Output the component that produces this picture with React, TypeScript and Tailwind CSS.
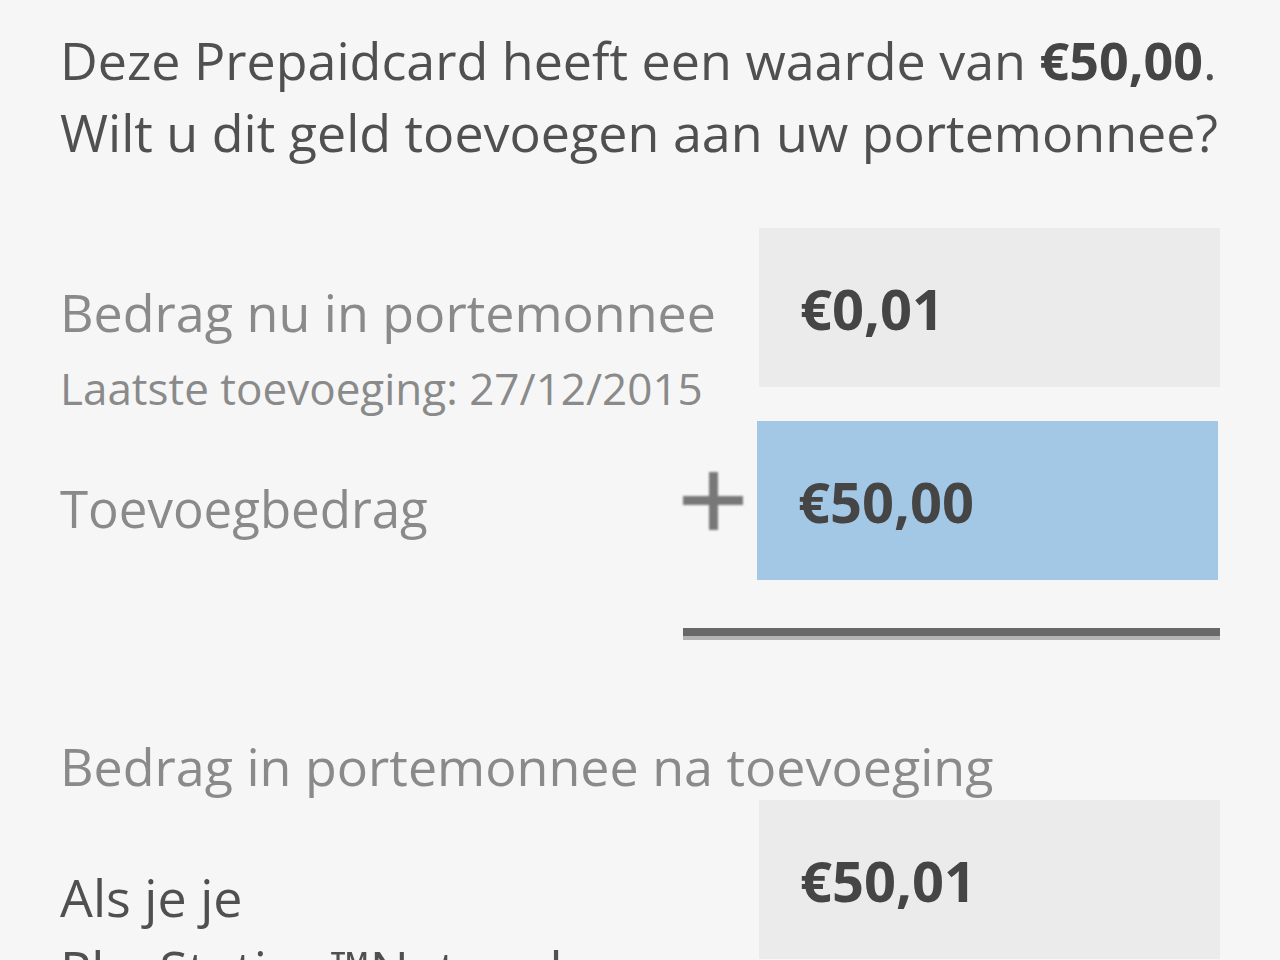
export default function App() {
  return (
    <div
      className="min-h-[960px] w-full overflow-hidden bg-[#f6f6f6] pl-[60px] pr-[60px] pt-[24px]"
      style={{ fontFamily: '"Open Sans", "Noto Sans", sans-serif' }}
    >
      {/* intro */}
      <p className="text-[52px] leading-[72px] text-[#505050]">
        Deze Prepaidcard heeft een waarde van <span className="font-bold text-[#454545]">€50,00</span>.
        <br />
        Wilt u dit geld toevoegen aan uw portemonnee?
      </p>

      {/* current amount */}
      <div className="mt-[60px] flex h-[159px]">
        <div className="flex-1 pt-[54px]">
          <div className="text-[52px] leading-[60px] text-[#8a8a8a]">Bedrag nu in portemonnee</div>
          <div className="mt-[20px] text-[44px] leading-[52px] text-[#8a8a8a]">Laatste toevoeging: 27/12/2015</div>
        </div>
        <div className="flex w-[461px] items-center bg-[#ebebeb] pl-[41px]">
          <span className="text-[56px] font-bold text-[#454545]">€0,01</span>
        </div>
      </div>

      {/* add amount */}
      <div className="mt-[34px] flex h-[159px] items-center">
        <div className="flex-1 pt-[14px] text-[51px] leading-[60px] text-[#8a8a8a]">Toevoegbedrag</div>
        <div className="mr-[14px] flex h-[60px] w-[60px] items-center justify-center">
          <div className="relative h-[58px] w-[60px]">
            <div className="absolute left-0 top-[24px] h-[9px] w-[60px] bg-[#787878] blur-[0.8px]" />
            <div className="absolute left-[26px] top-0 h-[58px] w-[9px] bg-[#787878] blur-[0.8px]" />
          </div>
        </div>
        <div className="mr-[2px] flex h-full w-[461px] items-center bg-[#a3c8e5] pl-[41px]">
          <span className="text-[56px] font-bold text-[#454545]">€50,00</span>
        </div>
      </div>

      {/* sum line */}
      <div className="mt-[48px] flex justify-end">
        <div className="w-[537px] border-b-[4px] border-[#b3b3b3]">
          <div className="h-[8px] bg-[#686868]" />
        </div>
      </div>

      {/* result */}
      <div className="mt-[96px] text-[52px] leading-[60px] text-[#8a8a8a]">
        Bedrag in portemonnee na toevoeging
      </div>
      <div className="mt-[4px] flex h-[159px]">
        <div className="flex-1 pr-[40px] pt-[61px] text-[52px] leading-[72px] text-[#505050]">
          Als je je PlayStation™Network-portemonnee wilt gebruiken
        </div>
        <div className="flex w-[461px] items-center bg-[#ebebeb] pl-[41px]">
          <span className="text-[56px] font-bold text-[#454545]">€50,01</span>
        </div>
      </div>
    </div>
  );
}
